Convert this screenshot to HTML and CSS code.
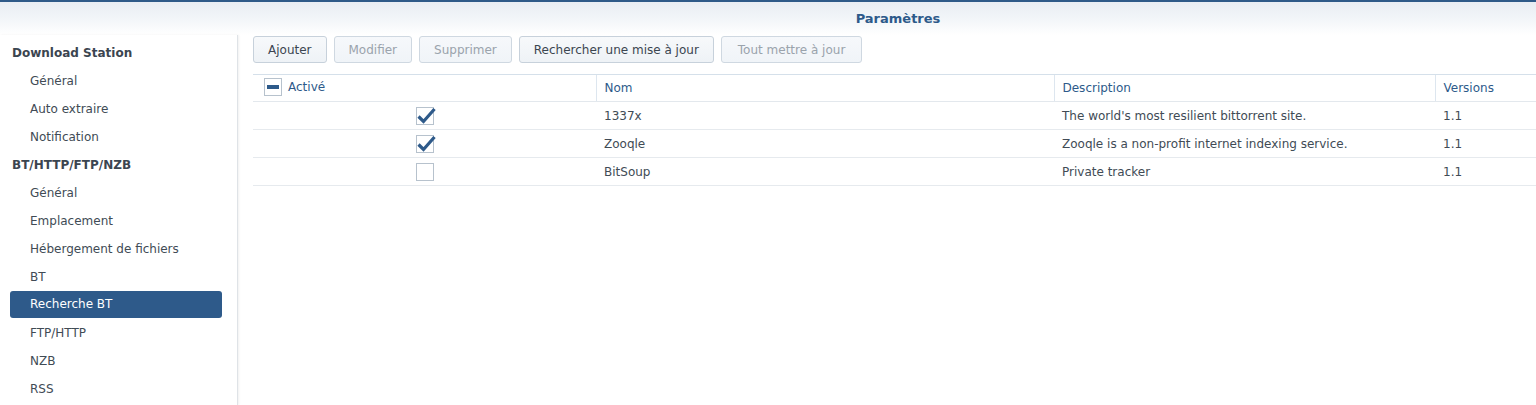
FILE: index.html
```html
<!DOCTYPE html>
<html lang="fr">
<head>
<meta charset="utf-8">
<title>Paramètres</title>
<link rel="stylesheet" href="styles.css">
</head>
<body>
<div class="window">
  <header class="titlebar">Paramètres</header>
  <div class="main">
    <nav class="sidebar">
      <div class="section">Download Station</div>
      <div class="item">Général</div>
      <div class="item">Auto extraire</div>
      <div class="item">Notification</div>
      <div class="section">BT/HTTP/FTP/NZB</div>
      <div class="item">Général</div>
      <div class="item">Emplacement</div>
      <div class="item">Hébergement de fichiers</div>
      <div class="item">BT</div>
      <div class="item selected">Recherche BT</div>
      <div class="item">FTP/HTTP</div>
      <div class="item">NZB</div>
      <div class="item">RSS</div>
    </nav>
    <section class="content">
      <div class="toolbar">
        <button class="btn">Ajouter</button>
        <button class="btn disabled">Modifier</button>
        <button class="btn disabled">Supprimer</button>
        <button class="btn">Rechercher une mise à jour</button>
        <button class="btn disabled wide">Tout mettre à jour</button>
      </div>
      <table class="grid">
        <colgroup>
          <col class="c1"><col class="c2"><col class="c3"><col class="c4">
        </colgroup>
        <thead>
          <tr>
            <th class="first"><span class="hcheck"><span class="cb partial"></span>Activé</span></th>
            <th>Nom</th>
            <th>Description</th>
            <th>Versions</th>
          </tr>
        </thead>
        <tbody>
          <tr>
            <td class="center"><span class="cb checked"><svg class="tick" viewBox="0 0 22 22" width="22" height="22"><path d="M3.5 11.5 L8.5 16.5 L19.5 4"/></svg></span></td>
            <td>1337x</td>
            <td>The world's most resilient bittorrent site.</td>
            <td>1.1</td>
          </tr>
          <tr>
            <td class="center"><span class="cb checked"><svg class="tick" viewBox="0 0 22 22" width="22" height="22"><path d="M3.5 11.5 L8.5 16.5 L19.5 4"/></svg></span></td>
            <td>Zooqle</td>
            <td>Zooqle is a non-profit internet indexing service.</td>
            <td>1.1</td>
          </tr>
          <tr>
            <td class="center"><span class="cb"></span></td>
            <td>BitSoup</td>
            <td>Private tracker</td>
            <td>1.1</td>
          </tr>
        </tbody>
      </table>
    </section>
  </div>
</div>
</body>
</html>
```

FILE: styles.css
```css
html, body {
  margin: 0;
  padding: 0;
  background: #ffffff;
}

body {
  font-family: "DejaVu Sans", Verdana, sans-serif;
  font-size: 12px;
  color: #414b55;
  overflow: hidden;
}

.window {
  border-top: 2px solid #2e5a88;
  height: 403px;
  display: flex;
  flex-direction: column;
}

.titlebar {
  height: 33px;
  line-height: 33px;
  padding-left: 260px;
  text-align: center;
  font-weight: bold;
  font-size: 13px;
  color: #2d5a8a;
  background: linear-gradient(to bottom, #e8edf3 0%, #f3f6f9 55%, #ffffff 100%);
  flex: none;
}

.main {
  flex: 1;
  display: flex;
  min-height: 0;
}

.sidebar {
  width: 238px;
  flex: none;
  padding-top: 4px;
  border-right: 1px solid #dfe3e7;
  box-shadow: 1px 0 2px rgba(0, 0, 0, 0.06);
  box-sizing: border-box;
}

.section {
  height: 28px;
  line-height: 28px;
  padding-left: 12px;
  font-weight: bold;
  color: #3b4550;
}

.item {
  height: 28px;
  line-height: 28px;
  padding-left: 20px;
  margin-left: 10px;
  width: 212px;
  box-sizing: border-box;
  color: #414b55;
}

.item.selected {
  background: #2e5a8a;
  color: #ffffff;
  border-radius: 3px;
  height: 27px;
  line-height: 27px;
  margin-bottom: 1px;
}

.content {
  flex: 1;
  padding: 1px 0 0 15px;
  min-width: 0;
}

.toolbar {
  display: flex;
  gap: 7px;
  height: 27px;
}

.btn {
  font-family: inherit;
  font-size: 12px;
  height: 27px;
  padding: 0 14px;
  border: 1px solid #c7d1db;
  border-radius: 3px;
  background: linear-gradient(to bottom, #f7f9fb, #eef2f6);
  color: #3b4550;
  cursor: default;
}

.btn.disabled {
  color: #9aa3ac;
  background: linear-gradient(to bottom, #f6f8fb, #f0f4f8);
  border-color: #cfd8e1;
}

.btn.wide {
  padding: 0 16px;
}

.grid {
  margin-top: 11px;
  width: 100%;
  border-collapse: collapse;
  table-layout: fixed;
}

.c1 { width: 343px; }
.c2 { width: 458px; }
.c3 { width: 381px; }
.c4 { width: auto; }

.grid th {
  height: 26px;
  padding: 0 8px;
  text-align: left;
  font-weight: normal;
  color: #2d5a8a;
  border-top: 1px solid #d5e0ea;
  border-bottom: 1px solid #e3e8ed;
  border-left: 1px solid #dde6ef;
  white-space: nowrap;
}

.grid th.first {
  border-left: none;
  padding-left: 11px;
}

.hcheck {
  display: inline-flex;
  align-items: center;
  gap: 6px;
}

.grid td {
  height: 27px;
  padding: 0 8px;
  border-bottom: 1px solid #e6eaee;
  white-space: nowrap;
  color: #414b55;
}

.grid td.center {
  text-align: center;
  padding: 0;
}

.cb {
  display: inline-block;
  position: relative;
  width: 16px;
  height: 16px;
  border: 1px solid #b7c2cd;
  background: #ffffff;
  vertical-align: middle;
  box-sizing: content-box;
}

.cb.partial::after {
  content: "";
  position: absolute;
  left: 2px;
  right: 2px;
  top: 6px;
  height: 4px;
  background: #2e5a8a;
}

.tick {
  position: absolute;
  left: -2px;
  top: -3px;
}

.tick path {
  fill: none;
  stroke: #2e5a8a;
  stroke-width: 3.2;
  stroke-linecap: butt;
  stroke-linejoin: miter;
}
```
